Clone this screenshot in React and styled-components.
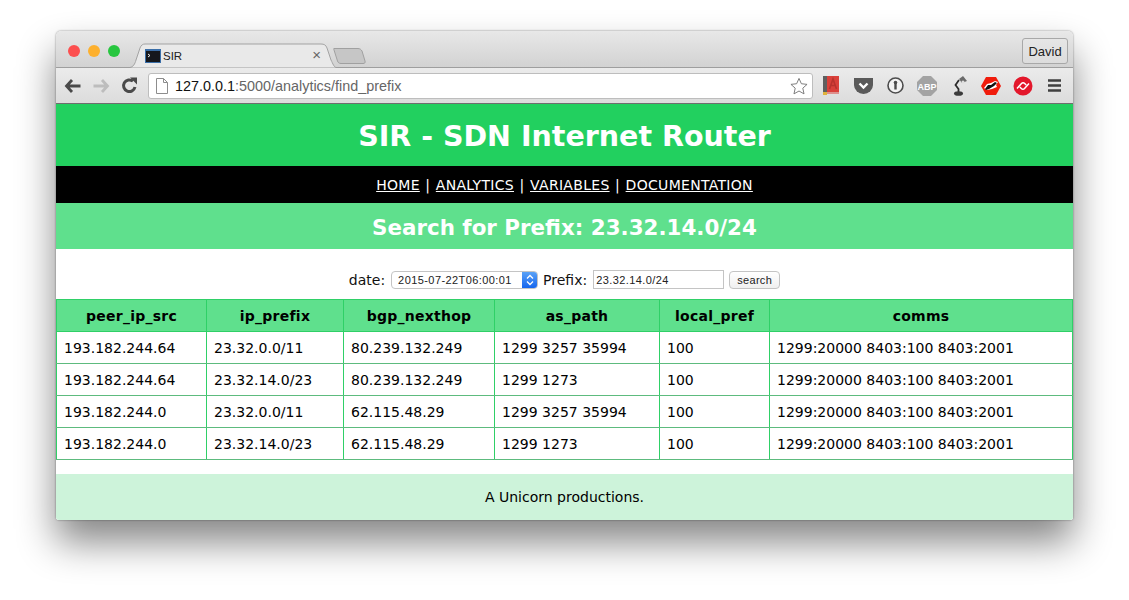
import styled, { createGlobalStyle } from "styled-components";

const rows = [
  ["193.182.244.64", "23.32.0.0/11", "80.239.132.249", "1299 3257 35994", "100", "1299:20000 8403:100 8403:2001"],
  ["193.182.244.64", "23.32.14.0/23", "80.239.132.249", "1299 1273", "100", "1299:20000 8403:100 8403:2001"],
  ["193.182.244.0", "23.32.0.0/11", "62.115.48.29", "1299 3257 35994", "100", "1299:20000 8403:100 8403:2001"],
  ["193.182.244.0", "23.32.14.0/23", "62.115.48.29", "1299 1273", "100", "1299:20000 8403:100 8403:2001"],
];

const columns = [
  { name: "peer_ip_src", width: 150 },
  { name: "ip_prefix", width: 137 },
  { name: "bgp_nexthop", width: 151 },
  { name: "as_path", width: 165 },
  { name: "local_pref", width: 110 },
  { name: "comms", width: 303 },
];

const App = () => {
  return (
    <Stage>
      <GlobalStyle />
      <Window>
        <TitleBar>
          <Lights>
            <Light $color="#fc4f4f" />
            <Light $color="#fdb02e" />
            <Light $color="#27c63f" />
          </Lights>
          <Tab>
            <TabShape viewBox="0 0 206 25" preserveAspectRatio="none">
              <path d="M0 24.5 C3 24 5 21 6 17 L10 5 C11 2 13 1 15 1 L191 1 C194 1 196 2 197 5 L201 17 C203 21 204 24 206 24.5" fill="#e9e9e9" stroke="#a3a3a3" />
            </TabShape>
            <Favicon>
              <svg width="16" height="14" viewBox="0 0 16 14">
                <rect width="16" height="14" fill="#3a6ea8" />
                <rect x="1" y="2" width="14" height="11" fill="#15171c" />
                <path d="M3 5l2 1.500L3 8" fill="none" stroke="#eee" strokeWidth="1" />
              </svg>
            </Favicon>
            <TabTitle>SIR</TabTitle>
            <TabClose>×</TabClose>
          </Tab>
          <NewTab>
            <svg width="34" height="18" viewBox="0 0 34 18">
              <path d="M1 1.500 L25 1.500 C27 1.500 28 2.500 29 4 L32 14 C32.500 16 31.500 16.500 30 16.500 L8 16.500 C6 16.500 5 15.500 4.500 14 L1 3 C0.800 2 0.500 1.500 1 1.500 Z" fill="#c6c6c6" stroke="#a0a0a0" />
            </svg>
          </NewTab>
          <UserButton>David</UserButton>
        </TitleBar>
        <Toolbar>
          <NavIcon $width={18}>
            <svg width="18" height="16" viewBox="0 0 18 16">
              <path d="M8 2L2.500 8 8 14M3 8h13.500" fill="none" stroke="#4a4a4a" strokeWidth="2.800" />
            </svg>
          </NavIcon>
          <NavIcon $width={38}>
            <svg width="18" height="16" viewBox="0 0 18 16">
              <path d="M10 2l5.500 6L10 14M15 8H1.500" fill="none" stroke="#bdbdbd" strokeWidth="2.800" />
            </svg>
          </NavIcon>
          <NavIcon $width={18}>
            <svg width="17" height="17" viewBox="0 0 17 17">
              <path d="M14 10A5.800 5.800 0 1 1 12 4.200" fill="none" stroke="#4a4a4a" strokeWidth="3" />
              <path d="M9 .5h7v7z" fill="#4a4a4a" />
            </svg>
          </NavIcon>
          <Omnibox>
            <svg width="12" height="16" viewBox="0 0 12 16">
              <path d="M.5 .5h7L11.500 4.500v11H.5zM7.500 .5v4h4" fill="#fff" stroke="#8d8d8d" />
            </svg>
            <Url>
              127.0.0.1<UrlRest>:5000/analytics/find_prefix</UrlRest>
            </Url>
            <Star>
              <svg width="18" height="18" viewBox="0 0 19 18">
                <path d="M9.500 1l2.500 5.600 6 .7-4.500 4 1.300 6-5.300-3-5.300 3 1.300-6-4.500-4 6-.7z" fill="#fff" stroke="#777" />
              </svg>
            </Star>
          </Omnibox>
          <Extensions>
            <Extension>
              <svg width="16" height="19" viewBox="0 0 16 19">
                <rect width="4" height="16" fill="#5f5f5f" />
                <rect x="4" width="12" height="16" fill="#d9403a" />
                <path d="M6.500 13L10 3l3.500 10M8 9.500h4" fill="none" stroke="#b8322d" strokeWidth="1.600" />
                <rect y="16" width="4" height="3" fill="#e0b33c" />
                <rect x="4" y="16.500" width="12" height="1" fill="#d9403a" />
              </svg>
            </Extension>
            <Extension>
              <svg width="19" height="16" viewBox="0 0 19 16">
                <path d="M0 0h19v7a9.500 9 0 0 1-19 0z" fill="#5a5a5a" />
                <path d="M5.500 5.500l4 4 4-4" fill="none" stroke="#fff" strokeWidth="2.400" />
              </svg>
            </Extension>
            <Extension>
              <svg width="17" height="17" viewBox="0 0 17 17">
                <circle cx="8.500" cy="8.500" r="7.500" fill="#f3f3f3" stroke="#4d4d4d" strokeWidth="1.600" />
                <circle cx="8.500" cy="5.500" r="1.800" fill="#4d4d4d" />
                <rect x="7.300" y="5.500" width="2.400" height="7" fill="#4d4d4d" />
              </svg>
            </Extension>
            <Extension>
              <svg width="20" height="20" viewBox="0 0 20 20">
                <path d="M6 0h8l6 6v8l-6 6H6l-6-6V6z" fill="#a3a3a3" />
                <text x="10" y="13.500" textAnchor="middle" fontFamily="Liberation Sans, sans-serif" fontWeight="700" fontSize="9" fill="#fff">ABP</text>
              </svg>
            </Extension>
            <Extension>
              <svg width="15" height="20" viewBox="0 0 15 20">
                <path d="M7 3l4-3 4 5-5 2z" fill="#6a6a6a" />
                <circle cx="11" cy="6" r="1.500" fill="#ddd" />
                <path d="M7 4L3.500 9l3 4v3" fill="none" stroke="#2c2c2c" strokeWidth="1.800" />
                <ellipse cx="6.500" cy="17.500" rx="4.500" ry="2.300" fill="#3b3b3b" />
              </svg>
            </Extension>
            <Extension>
              <svg width="20" height="18" viewBox="0 0 20 18">
                <path d="M5 0h10l5 9-5 9H5L0 9z" fill="#f01c0c" />
                <path d="M3 11l3-4 4-1 4-2 3 1-2 3 1 2-5 2-5 1z" fill="#fff" />
                <path d="M4 12l3-4 3 0 4-3 2 1-3 3-5 3-3 1z" fill="#111" />
              </svg>
            </Extension>
            <Extension>
              <svg width="20" height="20" viewBox="0 0 20 20">
                <circle cx="10" cy="10" r="9.500" fill="#e3172b" />
                <path d="M4 12.500L8.500 7.500c1-1.100 2.200-1 3.200 0l1.500 1.500M16 7.500L11.500 12.500c-1 1.100-2.200 1-3.200 0L6.800 11" fill="none" stroke="#fff" strokeWidth="1.500" />
              </svg>
            </Extension>
            <Extension>
              <svg width="14" height="13" viewBox="0 0 14 13">
                <path d="M0 1.500h13M0 6.500h13M0 11.500h13" stroke="#3f3f3f" strokeWidth="2.600" />
              </svg>
            </Extension>
          </Extensions>
        </Toolbar>
        <Page>
          <Header>SIR - SDN Internet Router</Header>
          <Nav>
            <NavLink href="#">HOME</NavLink> | <NavLink href="#">ANALYTICS</NavLink> |{" "}
            <NavLink href="#">VARIABLES</NavLink> | <NavLink href="#">DOCUMENTATION</NavLink>
          </Nav>
          <SubHeader>Search for Prefix: 23.32.14.0/24</SubHeader>
          <SearchForm>
            <FieldLabel>date:</FieldLabel>
            <DateSelect>
              <DateValue>2015-07-22T06:00:01</DateValue>
              <SelectArrows>
                <svg width="8" height="12" viewBox="0 0 8 12">
                  <path d="M1 4.500l3-3 3 3M1 7.500l3 3 3-3" fill="none" stroke="#fff" strokeWidth="1.300" />
                </svg>
              </SelectArrows>
            </DateSelect>
            <FieldLabel>Prefix:</FieldLabel>
            <PrefixInput defaultValue="23.32.14.0/24" />
            <SearchButton type="button">search</SearchButton>
          </SearchForm>
          <Table>
            <colgroup>
              {columns.map((c) => (
                <Col key={c.name} $width={c.width} />
              ))}
            </colgroup>
            <thead>
              <tr>
                {columns.map((c) => (
                  <Th key={c.name}>{c.name}</Th>
                ))}
              </tr>
            </thead>
            <tbody>
              {rows.map((row, i) => (
                <tr key={i}>
                  {row.map((cell, j) => (
                    <Td key={j}>{cell}</Td>
                  ))}
                </tr>
              ))}
            </tbody>
          </Table>
          <Footer>A Unicorn productions.</Footer>
        </Page>
      </Window>
    </Stage>
  );
};

const GlobalStyle = createGlobalStyle`
  html, body {
    margin: 0;
    height: 600px;
    overflow: hidden;
    background: #fff;
  }
`;

const Stage = styled.div`
  padding: 31px 56px 0;
  font-family: "DejaVu Sans", Verdana, sans-serif;
`;

const Window = styled.div`
  width: 1017px;
  height: 489px;
  border-radius: 5px 5px 3px 3px;
  overflow: hidden;
  display: flex;
  flex-direction: column;
  box-shadow: 0 22px 38px rgba(0, 0, 0, 0.48), 0 0 2px rgba(0, 0, 0, 0.5);
`;

const TitleBar = styled.div`
  height: 37px;
  flex: none;
  box-sizing: border-box;
  display: flex;
  align-items: flex-end;
  background: linear-gradient(#e8e8e8, #d2d2d2);
  border-bottom: 1px solid #9e9e9e;
`;

const Lights = styled.div`
  display: flex;
  gap: 8px;
  align-self: flex-start;
  margin: 14px 0 0 12px;
`;

const Light = styled.span`
  width: 12px;
  height: 12px;
  border-radius: 50%;
  background: ${(p) => p.$color};
`;

const Tab = styled.div`
  position: relative;
  width: 206px;
  height: 25px;
  margin: 0 0 -1px 10px;
  box-sizing: border-box;
  padding: 0 0 0 15px;
  display: flex;
  align-items: center;
  flex: none;
`;

const TabShape = styled.svg`
  position: absolute;
  left: 0;
  top: 0;
  width: 100%;
  height: 100%;
`;

const Favicon = styled.span`
  position: relative;
  display: flex;
`;

const TabTitle = styled.span`
  position: relative;
  margin-left: 2px;
  font: 11.500px "Liberation Sans", Arial, sans-serif;
  color: #222;
`;

const TabClose = styled.span`
  position: absolute;
  right: 15px;
  top: 3px;
  font: 15px/18px "Liberation Sans", Arial, sans-serif;
  color: #666;
`;

const NewTab = styled.span`
  display: flex;
  margin: 0 0 2px -3px;
`;

const UserButton = styled.button`
  margin: 0 5px 3px auto;
  width: 46px;
  height: 26px;
  padding: 0;
  background: linear-gradient(#e6e6e6, #dcdcdc);
  border: 1px solid #a8a8a8;
  border-radius: 3px;
  font: 13px "Liberation Sans", Arial, sans-serif;
  color: #222;
`;

const Toolbar = styled.div`
  height: 36px;
  flex: none;
  box-sizing: border-box;
  display: flex;
  align-items: center;
  padding-left: 8px;
  background: linear-gradient(#ebebeb, #dcdcdc);
  border-bottom: 1px solid #6e6e6e;
`;

const NavIcon = styled.span`
  width: ${(p) => p.$width}px;
  flex: none;
  display: flex;
  justify-content: center;
`;

const Omnibox = styled.div`
  width: 665px;
  height: 26px;
  flex: none;
  margin-left: 10px;
  box-sizing: border-box;
  display: flex;
  align-items: center;
  padding: 0 4px 0 7px;
  background: #fff;
  border: 1px solid #bdbdbd;
  border-radius: 3px;
`;

const Url = styled.span`
  margin-left: 7px;
  font: 14.400px "Liberation Sans", Arial, sans-serif;
  color: #111;
`;

const UrlRest = styled.span`
  color: #666;
`;

const Star = styled.span`
  display: flex;
  margin-left: auto;
`;

const Extensions = styled.div`
  display: flex;
  align-items: center;
  margin-left: 2px;
`;

const Extension = styled.span`
  width: 32px;
  display: flex;
  justify-content: center;
`;

const Page = styled.div`
  flex: 1;
  display: flex;
  flex-direction: column;
  background: #fff;
`;

const Header = styled.h1`
  margin: 0;
  height: 62px;
  flex: none;
  box-sizing: border-box;
  padding-top: 2px;
  display: flex;
  align-items: center;
  justify-content: center;
  background: #22d05f;
  color: #fff;
  font-size: 28.500px;
  font-weight: 700;
`;

const Nav = styled.nav`
  height: 37px;
  flex: none;
  display: flex;
  align-items: center;
  justify-content: center;
  gap: 5.500px;
  background: #000;
  color: #fff;
  font-size: 14px;
  letter-spacing: 0.3px;
`;

const NavLink = styled.a`
  color: #fff;
`;

const SubHeader = styled.h2`
  margin: 0;
  height: 46px;
  flex: none;
  box-sizing: border-box;
  padding-top: 3px;
  display: flex;
  align-items: center;
  justify-content: center;
  background: #5fe08d;
  color: #fff;
  font-size: 21.400px;
  font-weight: 700;
`;

const SearchForm = styled.form`
  height: 50px;
  flex: none;
  display: flex;
  align-items: center;
  justify-content: center;
  padding-top: 11px;
  box-sizing: border-box;
  gap: 5px;
`;

const FieldLabel = styled.label`
  font-size: 14px;
  color: #111;
`;

const DateSelect = styled.div`
  width: 147px;
  height: 18px;
  margin-left: 1px;
  box-sizing: border-box;
  display: flex;
  align-items: center;
  justify-content: space-between;
  background: #fff;
  border: 1px solid #c4c4c4;
  border-radius: 4px;
  overflow: hidden;
`;

const DateValue = styled.span`
  padding-left: 6px;
  font: 11px "Liberation Sans", Arial, sans-serif;
  letter-spacing: 0.42px;
  color: #222;
`;

const SelectArrows = styled.span`
  width: 15px;
  height: 100%;
  display: flex;
  align-items: center;
  justify-content: center;
  background: linear-gradient(#5aa2f7, #1666ee);
`;

const PrefixInput = styled.input`
  width: 131px;
  height: 19px;
  margin-left: 1px;
  padding: 0 2px;
  box-sizing: border-box;
  border: 1px solid #c4c4c4;
  font: 11px "Liberation Sans", Arial, sans-serif;
  letter-spacing: 0.4px;
  color: #222;
`;

const SearchButton = styled.button`
  width: 51px;
  height: 18px;
  padding: 0;
  background: linear-gradient(#fff, #f0f0f0);
  border: 1px solid #c4c4c4;
  border-radius: 4px;
  font: 11px "Liberation Sans", Arial, sans-serif;
  letter-spacing: 0.3px;
  color: #222;
`;

const Table = styled.table`
  width: 1016px;
  flex: none;
  table-layout: fixed;
  border-collapse: collapse;
  font-size: 14px;
`;

const Col = styled.col`
  width: ${(p) => p.$width}px;
`;

const Th = styled.th`
  height: 32px;
  padding: 0;
  box-sizing: border-box;
  background: #5fe08d;
  border: 1px solid #2fd067;
  color: #000;
  font-weight: 700;
  letter-spacing: 0.25px;
  text-align: center;
`;

const Td = styled.td`
  height: 32px;
  padding: 0 0 0 7px;
  box-sizing: border-box;
  border: 1px solid #2fd067;
  border-top-color: #5dbb7e;
  border-bottom-color: #5dbb7e;
  color: #000;
`;

const Footer = styled.footer`
  height: 46px;
  margin-top: 14px;
  flex: none;
  display: flex;
  align-items: center;
  justify-content: center;
  background: #cdf3da;
  color: #000;
  font-size: 14px;
`;

export default App;
